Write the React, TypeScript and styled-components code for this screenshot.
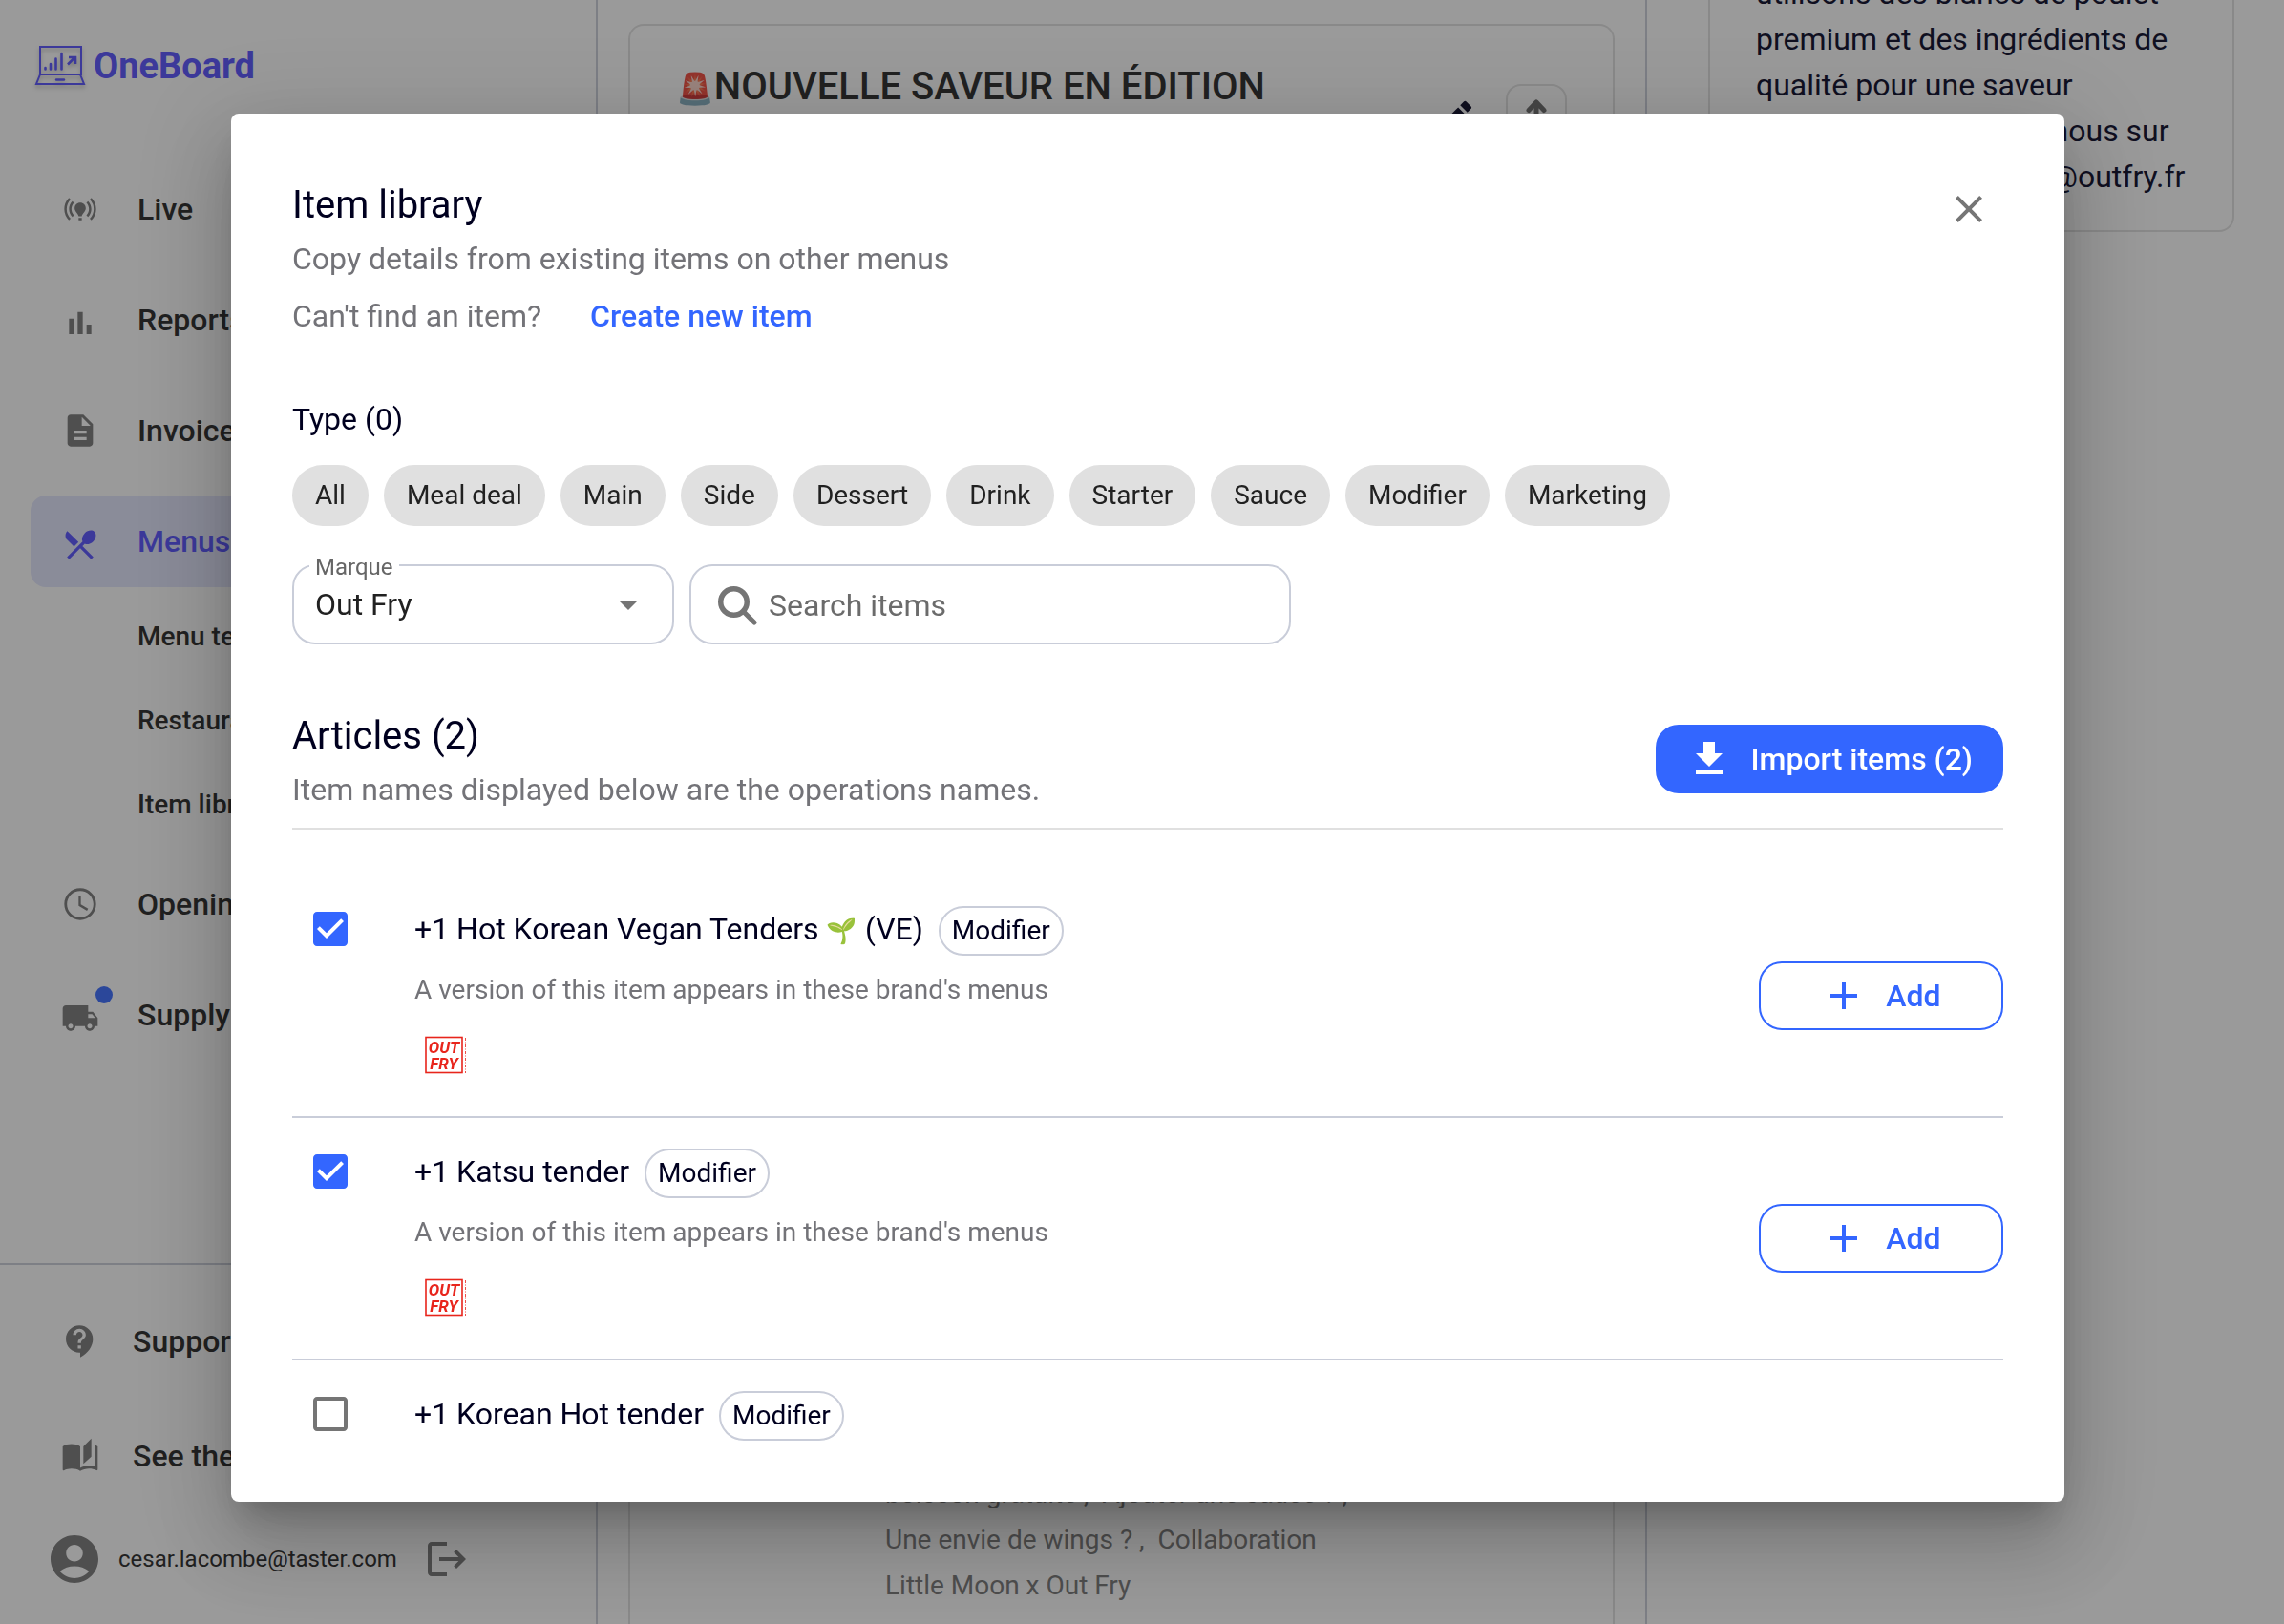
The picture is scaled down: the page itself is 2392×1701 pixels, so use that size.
import React, { useState } from "react";
import styled, { createGlobalStyle } from "styled-components";
import {
  MdAccountCircle,
  MdAutoStories,
  MdContactSupport,
  MdDescription,
  MdEdit,
  MdOnlinePrediction,
} from "react-icons/md";

const color = {
  ink: "#00001f",
  text: "#212121",
  muted: "#737378",
  icon: "#757575",
  blue: "#3366ff",
  violet: "#524dff",
  line: "#c9cdd9",
  softLine: "#e0e0e0",
};

const GlobalStyle = createGlobalStyle`
  *, *::before, *::after { box-sizing: border-box; }
  body {
    margin: 0;
    background: #fff;
    color: ${color.text};
    font-family: Roboto, "Noto Sans", "Noto Color Emoji", sans-serif;
    font-size: 32px;
    line-height: 48px;
    overflow: hidden;
  }
  h1, h2, h3, p, ul { margin: 0; padding: 0; }
  ul { list-style: none; }
  button, input, select { font: inherit; color: inherit; }
  button { cursor: pointer; }
  a { color: inherit; text-decoration: none; }
  svg { display: block; flex: none; }
`;

/* ---------- page behind the dialog ---------- */

const Page = styled.div`
  display: grid;
  grid-template-columns: 626px minmax(0, 1fr) 667px;
  height: 100vh;
  overflow: hidden;
`;

const Sidebar = styled.aside`
  display: flex;
  flex-direction: column;
  min-height: 0;
  border-right: 2px solid ${color.line};
`;

const Brand = styled.a`
  display: flex;
  align-items: center;
  gap: 8px;
  height: 44px;
  margin: 47px 36px 80px;
  color: ${color.violet};
  font-size: 38px;
  font-weight: 700;

  svg {
    filter: drop-shadow(0 3px 2px rgba(0, 0, 0, 0.25));
  }
`;

const Nav = styled.nav`
  display: flex;
  flex: 1;
  flex-direction: column;
  gap: 20px;
  min-height: 0;
  padding: 0 32px;
`;

const NavItem = styled.a<{ $active?: boolean; $gap?: number }>`
  display: flex;
  align-items: center;
  gap: ${(p) => p.$gap ?? 40}px;
  height: 96px;
  flex: none;
  padding: 0 32px;
  border-radius: 16px;
  background: ${(p) => (p.$active ? "#e2e5fd" : "transparent")};
  color: ${(p) => (p.$active ? color.violet : color.text)};
  font-weight: 500;

  svg {
    color: ${(p) => (p.$active ? color.violet : color.icon)};
  }
`;

const IconSlot = styled.span`
  position: relative;
  display: block;
`;

const Dot = styled.span`
  position: absolute;
  top: -10px;
  right: -14px;
  width: 18px;
  height: 18px;
  border-radius: 50%;
  background: ${color.blue};
`;

const SubNav = styled.ul`
  display: flex;
  flex-direction: column;
  gap: 16px;
  margin-top: -4px;
`;

const SubItem = styled.a`
  display: flex;
  align-items: center;
  height: 72px;
  padding-left: 112px;
  font-size: 28px;
  font-weight: 500;
`;

const SidebarFooter = styled.footer`
  display: flex;
  flex-direction: column;
  gap: 24px;
  padding: 32px 32px 8px;
  border-top: 2px solid ${color.line};
`;

const Account = styled.div`
  display: flex;
  align-items: center;
  gap: 16px;
  height: 120px;
  margin-top: -24px;
  padding-left: 16px;
  font-size: 24px;

  svg {
    color: ${color.icon};
  }
`;

const PlainButton = styled.button`
  display: flex;
  padding: 0;
  border: 0;
  background: none;
  color: ${color.icon};
`;

const LogoutButton = styled(PlainButton)`
  margin-left: 12px;
`;

const Main = styled.main`
  display: flex;
  min-width: 0;
  padding: 25px 32px 0;
  border-right: 2px solid ${color.line};
`;

const SectionCard = styled.section`
  display: flex;
  flex: 1;
  flex-direction: column;
  justify-content: space-between;
  min-width: 0;
  padding: 32px 48px 16px;
  border: 2px solid ${color.softLine};
  border-bottom: 0;
  border-radius: 16px 16px 0 0;
`;

const SectionHead = styled.header`
  display: flex;
  align-items: center;
  gap: 30px;
`;

const SectionTitle = styled.h2`
  flex: 1;
  font-size: 40px;
  font-weight: 500;
  line-height: 64px;
`;

const TitleEmoji = styled.span`
  font-size: 32px;
`;

const MoveButton = styled.button`
  display: flex;
  align-items: center;
  justify-content: center;
  width: 64px;
  height: 72px;
  padding: 0;
  border: 2px solid ${color.softLine};
  border-radius: 16px;
  background: none;
  color: #666;
`;

const Details = styled.div`
  display: grid;
  grid-template-columns: 180px 1fr;
  column-gap: 39px;
`;

const DetailsText = styled.p`
  grid-column: 2;
  color: ${color.icon};
  font-size: 28px;
  white-space: pre-line;
`;

const Aside = styled.aside`
  display: flex;
  flex-direction: column;
  justify-content: flex-end;
  height: 243px;
  overflow: hidden;
  padding: 0 52px 0 64px;
`;

const AboutCard = styled.section`
  padding: 32px 48px;
  border: 2px solid ${color.softLine};
  border-radius: 16px;
`;

const AboutText = styled.p`
  color: ${color.ink};
  white-space: pre;
`;

/* ---------- dialog ---------- */

const Backdrop = styled.div`
  position: fixed;
  inset: 0;
  display: flex;
  justify-content: center;
  padding: 119px 0 128px 12px;
  background: rgba(34, 34, 34, 0.46);
`;

const Dialog = styled.div`
  display: flex;
  flex-direction: column;
  width: 100%;
  max-width: 1920px;
  padding: 64px;
  border-radius: 8px;
  background: #fff;
  box-shadow:
    0 22px 30px -14px rgba(0, 0, 0, 0.2),
    0 48px 76px 6px rgba(0, 0, 0, 0.14),
    0 18px 92px 16px rgba(0, 0, 0, 0.12);
`;

const DialogBody = styled.div`
  display: flex;
  flex: 1;
  flex-direction: column;
  min-height: 0;
  overflow-y: auto;
  scrollbar-width: none;
`;

const DialogHead = styled.header`
  display: flex;
  align-items: flex-start;
  justify-content: space-between;
`;

const Title = styled.h2`
  color: ${color.ink};
  font-size: 40px;
  font-weight: 400;
  line-height: 64px;
`;

const Muted = styled.p`
  color: ${color.muted};
`;

const CreateLine = styled.div`
  display: flex;
  gap: 51px;
  margin-top: 12px;
`;

const CreateLink = styled.a`
  color: ${color.blue};
  font-weight: 500;
`;

const CloseButton = styled(PlainButton)`
  margin: 12px 12px 0 0;
`;

const Label = styled.h3`
  margin: 60px 0 24px;
  color: ${color.ink};
  font-size: 32px;
  font-weight: 400;
`;

const Chips = styled.div`
  display: flex;
  flex-wrap: wrap;
  gap: 16px;
`;

const Chip = styled.button`
  height: 64px;
  padding: 0 24px;
  border: 0;
  border-radius: 32px;
  background: #e0e0e0;
  font-size: 28px;
`;

const Filters = styled.div`
  display: flex;
  gap: 16px;
  margin-top: 40px;
`;

const SelectField = styled.div`
  position: relative;
  display: grid;
  align-items: center;
  width: 400px;
  color: ${color.icon};

  > select,
  > svg {
    grid-area: 1 / 1;
  }

  > svg {
    justify-self: end;
    margin-right: 24px;
    pointer-events: none;
  }
`;

const SelectLabel = styled.label`
  position: absolute;
  top: -9px;
  left: 18px;
  padding: 0 6px;
  background: #fff;
  color: #666;
  font-size: 24px;
  line-height: 24px;
`;

const Select = styled.select`
  width: 100%;
  height: 84px;
  padding: 0 72px 0 22px;
  border: 2px solid ${color.line};
  border-radius: 24px;
  background: #fff;
  color: ${color.text};
  appearance: none;
`;

const SearchField = styled.label`
  display: flex;
  align-items: center;
  gap: 12px;
  width: 630px;
  height: 84px;
  padding: 2px 28px 0;
  border: 2px solid ${color.line};
  border-radius: 24px;
  color: ${color.icon};
`;

const SearchInput = styled.input`
  flex: 1;
  min-width: 0;
  height: 48px;
  padding: 0;
  border: 0;
  outline: 0;
  background: none;
  color: ${color.text};

  &::placeholder {
    color: #6b6b6b;
    opacity: 1;
  }
`;

const ListHead = styled.header`
  display: flex;
  align-items: center;
  justify-content: space-between;
  flex: none;
  margin-top: 64px;
  padding-bottom: 16px;
  border-bottom: 2px solid ${color.softLine};
`;

const ActionButton = styled.button<{ $filled?: boolean }>`
  display: flex;
  align-items: center;
  justify-content: center;
  gap: 20px;
  min-width: 256px;
  height: 72px;
  padding: 0 30px;
  border: 2px solid ${color.blue};
  border-radius: 24px;
  background: ${(p) => (p.$filled ? color.blue : "#fff")};
  color: ${(p) => (p.$filled ? "#fff" : color.blue)};
  font-weight: 500;
`;

const ItemList = styled.ul`
  flex: none;
  padding-top: 48px;
`;

const ItemRow = styled.li`
  display: flex;
  align-items: center;
  padding: 32px 0 32px 16px;
  border-bottom: 2px solid ${color.line};
`;

const CheckBox = styled.span<{ $on: boolean }>`
  display: grid;
  align-self: flex-start;
  margin-right: 64px;
  color: ${(p) => (p.$on ? color.blue : color.icon)};

  > * {
    grid-area: 1 / 1;
  }
`;

const CheckInput = styled.input`
  width: 48px;
  height: 48px;
  margin: 0;
  opacity: 0;
  cursor: pointer;
`;

const ItemInfo = styled.div`
  display: flex;
  flex: 1;
  flex-direction: column;
  gap: 16px;
`;

const NameLine = styled.div`
  display: flex;
  align-items: flex-start;
  gap: 16px;
`;

const ItemName = styled.label`
  color: ${color.ink};
`;

const NameEmoji = styled.span`
  margin-left: 8px;
  font-size: 26px;
`;

const Tag = styled.span`
  height: 52px;
  padding: 0 12px;
  border: 2px solid ${color.line};
  border-radius: 26px;
  color: ${color.ink};
  font-size: 28px;
`;

const ItemNote = styled.p`
  color: ${color.muted};
  font-size: 28px;
  line-height: 40px;
`;

/* ---------- drawings ---------- */

const Glyph = ({ d, size = 48, lower = 0 }: { d: string; size?: number; lower?: number }) => (
  <svg width={size} height={size} viewBox={`0 ${-lower} 24 24`} fill="currentColor" aria-hidden="true">
    <path d={d} />
  </svg>
);

const paths = {
  bars: "M5 9.2h3.2V19H5zM10.4 5h3.2v14h-3.2zm5.6 8H19v6h-3z",
  menu: "M8.1 13.34l2.83-2.83L3.91 3.5c-1.56 1.56-1.56 4.09 0 5.66l4.19 4.18zm6.78-1.81c1.53.71 3.68.21 5.27-1.38 1.91-1.91 2.28-4.65.81-6.12-1.46-1.46-4.2-1.1-6.12.81-1.59 1.59-2.09 3.74-1.38 5.27L3.7 19.87l1.41 1.41L12 14.41l6.88 6.88 1.41-1.41L13.41 13l1.47-1.47z",
  clock:
    "M11.99 2C6.47 2 2 6.48 2 12s4.47 10 9.99 10C17.52 22 22 17.52 22 12S17.52 2 11.99 2zM12 20.3c-4.6 0-8.3-3.7-8.3-8.3S7.4 3.7 12 3.7s8.3 3.7 8.3 8.3-3.7 8.3-8.3 8.3zm.4-13.3H11v6l5.25 3.15.75-1.23-4.6-2.73z",
  truck:
    "M20 8h-3V4H3c-1.1 0-2 .9-2 2v11h2c0 1.66 1.34 3 3 3s3-1.34 3-3h6c0 1.66 1.34 3 3 3s3-1.34 3-3h2v-5l-3-4zM6 18.5c-.83 0-1.5-.67-1.5-1.5s.67-1.5 1.5-1.5 1.5.67 1.5 1.5-.67 1.5-1.5 1.5zm13.5-9l1.96 2.5H17V9.5h2.5zm-1.5 9c-.83 0-1.5-.67-1.5-1.5s.67-1.5 1.5-1.5 1.5.67 1.5 1.5-.67 1.5-1.5 1.5z",
  logout:
    "m17 7-1.41 1.41L18.17 11H8v2h10.17l-2.58 2.58L17 17l5-5zM4 5h8V3H4c-1.1 0-2 .9-2 2v14c0 1.1.9 2 2 2h8v-2H4V5z",
  close:
    "M19 6.41L17.59 5 12 10.59 6.41 5 5 6.41 10.59 12 5 17.59 6.41 19 12 13.41 17.59 19 19 17.59 13.41 12z",
  drop: "M7 10l5 5 5-5z",
  download: "M19 9h-4V3H9v6H5l7 7 7-7zM5 18v2h14v-2H5z",
  plus: "M19 13h-6v6h-2v-6H5v-2h6V5h2v6h6v2z",
  checked:
    "M19 3H5c-1.11 0-2 .9-2 2v14c0 1.1.89 2 2 2h14c1.11 0 2-.9 2-2V5c0-1.1-.89-2-2-2zm-9 14l-5-5 1.41-1.41L10 14.17l7.59-7.59L19 8l-9 9z",
  unchecked: "M19 5v14H5V5h14m0-2H5c-1.1 0-2 .9-2 2v14c0 1.1.9 2 2 2h14c1.1 0 2-.9 2-2V5c0-1.1-.9-2-2-2z",
};

const LaptopLogo = () => (
  <svg width="54" height="42" viewBox="0 0 54 42" fill="none" stroke="currentColor" strokeWidth="2" aria-hidden="true">
    <path d="M6 30V1h43v29z" />
    <path d="M6 30 2 40h50l-4-10" />
    <path d="M23 35.5h8" strokeWidth="2.4" strokeLinecap="round" />
    <path d="M11.5 23v1.5M17 19v5.5M22.5 13.500v11M28.5 8v16.5" strokeWidth="2.6" strokeLinecap="round" />
    <path d="m35 19.5 7.500-7.500M36 12h7v7" strokeWidth="2.6" />
  </svg>
);

const SearchGlyph = () => (
  <svg width="41" height="41" viewBox="0 0 41 41" fill="none" stroke="currentColor" aria-hidden="true">
    <circle cx="16.5" cy="16.5" r="13.75" strokeWidth="5.5" />
    <path d="m26.5 26.5 11.500 11.500" strokeWidth="5" strokeLinecap="round" />
  </svg>
);

const ArrowUp = () => (
  <svg width="32" height="40" viewBox="0 0 32 40" fill="none" stroke="currentColor" strokeWidth="5" strokeLinecap="round" strokeLinejoin="round" aria-hidden="true">
    <path d="M16 34V3M8 11.500l8-8.500 8 8.500" />
  </svg>
);

const OutFryLogo = () => (
  <svg width="64" height="64" viewBox="0 0 64 64" role="img" aria-label="Out Fry">
    <rect x="12" y="13.5" width="38" height="37" fill="none" stroke="#e8251c" strokeWidth="1.6" />
    <path d="M53.5 14v37" stroke="#e8251c" strokeWidth="1" strokeDasharray="3 1.5 1 1.5" opacity="0.8" />
    <g fill="#e8251c" fontFamily="Roboto, sans-serif" fontSize="17" fontWeight="700" fontStyle="italic" textAnchor="middle">
      <text x="31" y="30">OUT</text>
      <text x="31" y="47">FRY</text>
    </g>
  </svg>
);

/* ---------- content ---------- */

const types = ["All", "Meal deal", "Main", "Side", "Dessert", "Drink", "Starter", "Sauce", "Modifier", "Marketing"];

const items = [
  { id: "vegan", name: <>+1 Hot Korean Vegan Tenders<NameEmoji>🌱</NameEmoji> (VE)</>, picked: true },
  { id: "katsu", name: <>+1 Katsu tender</>, picked: true },
  { id: "korean", name: <>+1 Korean Hot tender</>, picked: false },
];

const Item = ({ id, name, picked }: (typeof items)[number]) => {
  const [on, setOn] = useState(picked);
  return (
    <ItemRow>
      <CheckBox $on={on}>
        <Glyph d={on ? paths.checked : paths.unchecked} />
        <CheckInput id={id} type="checkbox" checked={on} onChange={() => setOn(!on)} />
      </CheckBox>
      <ItemInfo>
        <NameLine>
          <ItemName htmlFor={id}>{name}</ItemName>
          <Tag>Modifier</Tag>
        </NameLine>
        <ItemNote>A version of this item appears in these brand's menus</ItemNote>
        <OutFryLogo />
      </ItemInfo>
      <ActionButton type="button">
        <Glyph d={paths.plus} />
        Add
      </ActionButton>
    </ItemRow>
  );
};

export default function App() {
  return (
    <>
      <GlobalStyle />
      <Page>
        <Sidebar>
          <Brand href="#home">
            <LaptopLogo />
            OneBoard
          </Brand>
          <Nav>
            <NavItem href="#live"><MdOnlinePrediction size={40} />Live</NavItem>
            <NavItem href="#reports"><Glyph d={paths.bars} size={40} lower={2} />Reports</NavItem>
            <NavItem href="#invoices"><MdDescription size={40} />Invoices</NavItem>
            <NavItem href="#menus" $active><Glyph d={paths.menu} size={40} lower={2} />Menus</NavItem>
            <SubNav>
              <li><SubItem href="#templates">Menu templates</SubItem></li>
              <li><SubItem href="#restaurants">Restaurants</SubItem></li>
              <li><SubItem href="#library">Item library</SubItem></li>
            </SubNav>
            <NavItem href="#opening"><Glyph d={paths.clock} size={40} />Opening hours</NavItem>
            <NavItem href="#supply">
              <IconSlot>
                <Glyph d={paths.truck} size={40} lower={2} />
                <Dot />
              </IconSlot>
              Supply
            </NavItem>
          </Nav>
          <SidebarFooter>
            <NavItem href="#support" $gap={35}><MdContactSupport size={40} />Support</NavItem>
            <NavItem href="#guide" $gap={35}><MdAutoStories size={40} />See the guide</NavItem>
            <Account>
              <MdAccountCircle size={60} />
              cesar.lacombe@taster.com
              <LogoutButton type="button" aria-label="Log out"><Glyph d={paths.logout} /></LogoutButton>
            </Account>
          </SidebarFooter>
        </Sidebar>

        <Main>
          <SectionCard>
            <SectionHead>
              <SectionTitle>
                <TitleEmoji>🚨</TitleEmoji>NOUVELLE SAVEUR EN ÉDITION LIMITÉE
              </SectionTitle>
              <PlainButton type="button" aria-label="Edit section">
                <MdEdit size={48} color={color.ink} />
              </PlainButton>
              <MoveButton type="button" aria-label="Move up"><ArrowUp /></MoveButton>
            </SectionHead>
            <Details>
              <DetailsText>
                {"boisson gratuite ,\u00a0 Ajouter une sauce ? ,\nUne envie de wings ? ,\u00a0 Collaboration\nLittle Moon x Out Fry"}
              </DetailsText>
            </Details>
          </SectionCard>
        </Main>

        <Aside>
          <AboutCard>
            <AboutText>
              {"Chez Out Fry, nous\nutilisons des blancs de poulet\npremium et des ingrédients de\nqualité pour une saveur\ninimitable. Contactez-nous sur\ncette adresse contact@outfry.fr"}
            </AboutText>
          </AboutCard>
        </Aside>
      </Page>

      <Backdrop>
        <Dialog role="dialog" aria-modal="true" aria-labelledby="dialog-title">
          <DialogBody>
            <DialogHead>
              <div>
                <Title id="dialog-title">Item library</Title>
                <Muted>Copy details from existing items on other menus</Muted>
                <CreateLine>
                  <Muted>Can't find an item?</Muted>
                  <CreateLink href="#new">Create new item</CreateLink>
                </CreateLine>
              </div>
              <CloseButton type="button" aria-label="Close"><Glyph d={paths.close} /></CloseButton>
            </DialogHead>

            <Label>Type (0)</Label>
            <Chips>
              {types.map((t) => (
                <Chip key={t} type="button">{t}</Chip>
              ))}
            </Chips>

            <Filters>
              <SelectField>
                <Select id="brand" defaultValue="Out Fry">
                  <option>Out Fry</option>
                </Select>
                <Glyph d={paths.drop} />
                <SelectLabel htmlFor="brand">Marque</SelectLabel>
              </SelectField>
              <SearchField>
                <SearchGlyph />
                <SearchInput type="text" placeholder="Search items" aria-label="Search items" />
              </SearchField>
            </Filters>

            <ListHead>
              <div>
                <Title as="h3">Articles (2)</Title>
                <Muted>Item names displayed below are the operations names.</Muted>
              </div>
              <ActionButton type="button" $filled>
                <Glyph d={paths.download} />
                Import items (2)
              </ActionButton>
            </ListHead>

            <ItemList>
              {items.map((item) => (
                <Item key={item.id} {...item} />
              ))}
            </ItemList>
          </DialogBody>
        </Dialog>
      </Backdrop>
    </>
  );
}
